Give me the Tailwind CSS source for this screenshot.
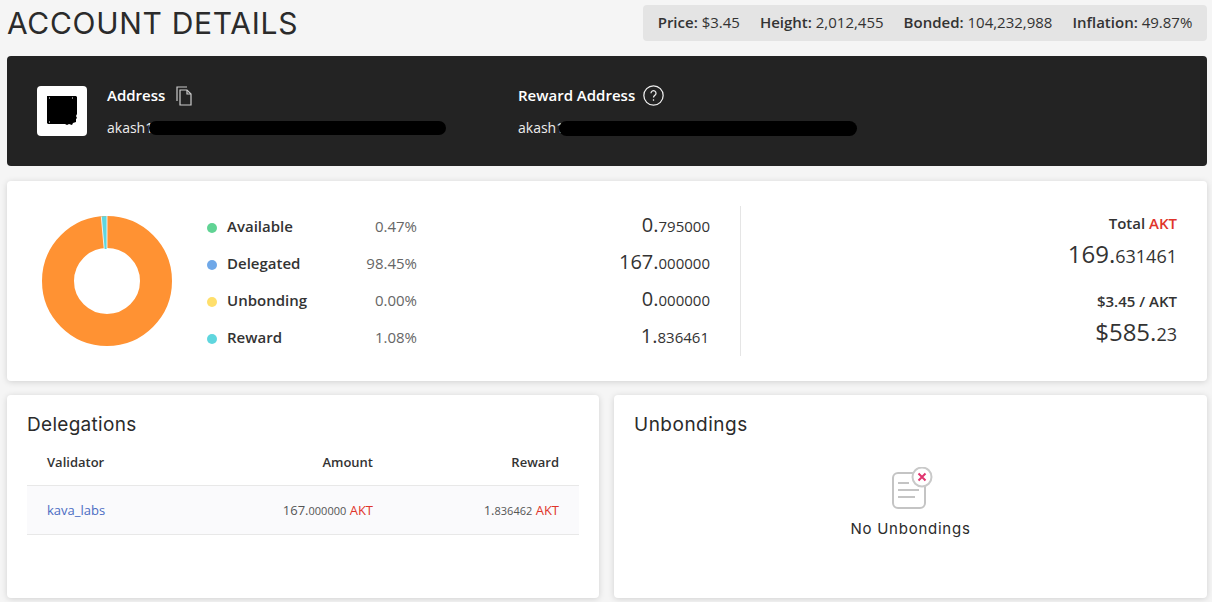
<!DOCTYPE html>
<html lang="en">
<head>
    <meta charset="UTF-8">
    <title>Account Details</title>
    <script src="https://cdn.jsdelivr.net/npm/@tailwindcss/browser@4"></script>
</head>
<body class="bg-[#f5f5f5] font-['Open_Sans',sans-serif] text-[#23262f] overflow-hidden">
<main class="w-[1212px] h-[602px] px-[7px] pt-[5px] pr-[5px]">

    <!-- header -->
    <header class="flex justify-between items-center h-9">
        <h1 class="font-['Inter',sans-serif] text-[30px] leading-9 tracking-[0.7px] text-[#2b2b2b]">ACCOUNT DETAILS</h1>
        <div class="flex items-center gap-5 h-9 w-[564px] justify-center bg-[#e4e4e4] rounded text-[15px] pb-[2px] text-[#333]">
            <span><b class="font-semibold">Price:</b> $3.45</span>
            <span><b class="font-semibold">Height:</b> 2,012,455</span>
            <span><b class="font-semibold">Bonded:</b> 104,232,988</span>
            <span><b class="font-semibold">Inflation:</b> 49.87%</span>
        </div>
    </header>

    <!-- addresses -->
    <section class="mt-[15px] h-[110px] bg-[#232323] rounded flex items-center pl-[30px] text-white">
        <div class="w-[50px] h-[50px] bg-white rounded flex items-center justify-center">
            <svg width="32" height="32" viewBox="0 0 32 32">
                <path d="M1 1h29l1 1v17l-1 2 1 2-1 1v3l-3 1-1 2-3-1-2 1-2-1H2l-1-1z" fill="#000"/>
                <path d="M3 3h1M26 3h1M3 27h1" stroke="#fff" stroke-width="1"/>
            </svg>
        </div>
        <div class="ml-5 w-[411px]">
            <div class="flex items-center h-[23px] text-[15px] font-semibold">Address
                <svg class="ml-[11px]" width="17" height="20" viewBox="0 0 17 20" fill="none" stroke="#ccc" stroke-width="1.2"><path d="M1 15V1h10"/><path d="M4 4h7l4 4v11H4z"/><path d="M11 4v4h4"/></svg>
            </div>
            <div class="flex items-center h-5 mt-[11px] text-sm text-[#eee]">akash1<span class="block w-[297px] h-[14px] bg-black rounded-full -ml-[4px]"></span></div>
        </div>
        <div>
            <div class="flex items-center h-[23px] text-[15px] font-semibold">Reward Address
                <svg class="ml-2" width="21" height="21" viewBox="0 0 20 20" fill="none" stroke="#eee" stroke-width="1.2"><circle cx="10" cy="10" r="9.2"/><path d="M7.6 7.8a2.4 2.4 0 1 1 3.6 2.1c-.8.5-1.2 1-1.2 2"/><path d="M10 13.6v1.4"/></svg>
            </div>
            <div class="flex items-center h-5 mt-[11px] text-sm text-[#eee]">akash1<span class="block w-[298px] h-[15px] bg-black rounded-full -ml-[5px]"></span></div>
        </div>
    </section>

    <!-- balances -->
    <section class="mt-[15px] h-[200px] bg-white rounded shadow-[0_1px_6px_rgba(0,0,0,0.15)] flex items-center pl-[35px] pr-[30px]">
        <svg width="130" height="130" viewBox="0 0 130 130" class="shrink-0">
            <circle cx="65" cy="65" r="49" fill="none" stroke="#ff9233" stroke-width="32"/>
            <path d="M59.3 0.5 L62.2 33 L65 33 L65 0 Z" fill="#5fd6de"/>
            <path d="M65 0V33M59.3 0.5L62.2 33" stroke="#fff" stroke-width="0.8"/>
        </svg>
        <div class="ml-[35px] w-[503px] h-[150px] pt-[2px] text-[#23262f]">
            <div class="flex items-baseline h-[37px] pt-[3px]">
                <span class="w-[10px] h-[10px] rounded-full bg-[#60d394] mr-[10px] self-center"></span>
                <span class="w-[120px] text-[15px] font-semibold text-[#333]">Available</span>
                <span class="w-[70px] text-right text-[15px] text-[#666]">0.47%</span>
                <span class="flex-1 text-right text-xl text-[#333]">0.<span class="text-[15px]">795000</span></span>
            </div>
            <div class="flex items-baseline h-[37px] pt-[3px]">
                <span class="w-[10px] h-[10px] rounded-full bg-[#6fa8e8] mr-[10px] self-center"></span>
                <span class="w-[120px] text-[15px] font-semibold text-[#333]">Delegated</span>
                <span class="w-[70px] text-right text-[15px] text-[#666]">98.45%</span>
                <span class="flex-1 text-right text-xl text-[#333]">167.<span class="text-[15px]">000000</span></span>
            </div>
            <div class="flex items-baseline h-[37px] pt-[3px]">
                <span class="w-[10px] h-[10px] rounded-full bg-[#ffdf6b] mr-[10px] self-center"></span>
                <span class="w-[120px] text-[15px] font-semibold text-[#333]">Unbonding</span>
                <span class="w-[70px] text-right text-[15px] text-[#666]">0.00%</span>
                <span class="flex-1 text-right text-xl text-[#333]">0.<span class="text-[15px]">000000</span></span>
            </div>
            <div class="flex items-baseline h-[37px] pt-[3px]">
                <span class="w-[10px] h-[10px] rounded-full bg-[#5fd6de] mr-[10px] self-center"></span>
                <span class="w-[120px] text-[15px] font-semibold text-[#333]">Reward</span>
                <span class="w-[70px] text-right text-[15px] text-[#666]">1.08%</span>
                <span class="flex-1 text-right text-xl text-[#333] pr-[1px]">1.<span class="text-[15px]">836461</span></span>
            </div>
        </div>
        <div class="ml-[30px] flex-1 h-[150px] border-l border-[#e5e5e5] text-right text-[#333]">
            <div class="text-[15px] font-semibold mt-[7px] leading-5">Total <span class="text-[#e0352b] font-semibold">AKT</span></div>
            <div class="text-2xl leading-8 mt-[5px]">169.<span class="text-lg">631461</span></div>
            <div class="text-[15px] font-semibold mt-[21px] leading-5">$3.45 / AKT</div>
            <div class="text-2xl leading-8 mt-[5px]">$585.<span class="text-lg">23</span></div>
        </div>
    </section>

    <!-- bottom cards -->
    <div class="mt-[14px] grid grid-cols-[592px_593px] gap-[15px]">
        <section class="h-[203px] bg-white rounded shadow-[0_1px_6px_rgba(0,0,0,0.15)] pt-[18px] px-[20px]">
            <h2 class="font-['Inter',sans-serif] text-[19px] tracking-[0.3px] leading-6 text-[#2b2b2b]">Delegations</h2>
            <table class="w-[552px] mt-[3px] text-[13px]">
                <thead>
                    <tr class="h-[45px] border-b border-[#e8e8e8] text-[#333] font-semibold">
                        <th class="text-left pl-[20px] font-semibold">Validator</th>
                        <th class="text-right font-semibold">Amount</th>
                        <th class="text-right pr-[20px] font-semibold w-[206px]">Reward</th>
                    </tr>
                </thead>
                <tbody>
                    <tr class="h-[49px] bg-[#fafafc] border-b border-[#e8e8e8] text-[#555]">
                        <td class="pl-[20px] pt-[2px] text-[#4a6cc3]">kava_labs</td>
                        <td class="text-right pt-[2px]">167.<span class="text-[11px]">000000</span> <span class="text-[#e0352b]">AKT</span></td>
                        <td class="text-right pt-[2px] pr-[20px]">1.<span class="text-[11px]">836462</span> <span class="text-[#e0352b]">AKT</span></td>
                    </tr>
                </tbody>
            </table>
        </section>
        <section class="h-[203px] bg-white rounded shadow-[0_1px_6px_rgba(0,0,0,0.15)] pt-[18px] px-[20px]">
            <h2 class="font-['Inter',sans-serif] text-[19px] tracking-[0.5px] leading-6 text-[#2b2b2b]">Unbondings</h2>
            <div class="flex flex-col items-center mt-[30px]">
                <svg width="42" height="44" viewBox="0 0 42 44" fill="none" class="ml-[3px]">
                    <rect x="2" y="6" width="32" height="35" rx="5" stroke="#c4c4c4" stroke-width="2"/>
                    <path d="M7 16h11M7 23h21M7 30h17" stroke="#c4c4c4" stroke-width="2"/>
                    <circle cx="31" cy="10" r="9.500" fill="#fff" stroke="#c9c9c9" stroke-width="2"/>
                    <path d="M27.500 6.500l7 7M34.500 6.500l-7 7" stroke="#e0356f" stroke-width="2"/>
                </svg>
                <p class="font-['Inter',sans-serif] text-[15px] leading-5 mt-[8px] tracking-[0.75px] text-[#2b2b2b]">No Unbondings</p>
            </div>
        </section>
    </div>
</main>
</body>
</html>
